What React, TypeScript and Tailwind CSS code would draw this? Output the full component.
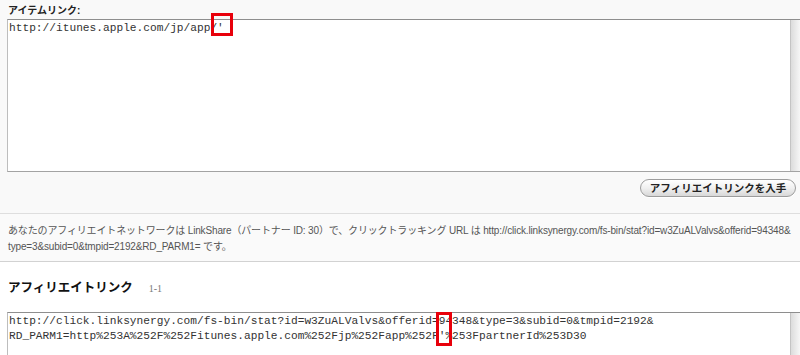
import React from 'react';

const SANS = 'font-["Liberation_Sans","Noto_Sans_CJK_JP",sans-serif]';
const MONO = 'font-["Liberation_Mono","Noto_Sans_CJK_JP",monospace]';

function Marker({ className }: { className: string }) {
  return <span className={`pointer-events-none absolute border-[3px] border-[#e8000b] ${className}`} />;
}

function FakeTextarea({ height, children }: { height: string; children: React.ReactNode }) {
  return (
    <div
      className={`relative flex ${height} w-[793px] border-t border-l border-b border-t-[#8e8e8e] border-l-[#bdbdbd] border-b-[#a3a3a3] bg-white`}
    >
      <div className={`flex-1 pl-[1px] pt-[1px] text-[11.2px] leading-[15px] text-[#333] ${MONO} whitespace-pre`}>
        {children}
      </div>
      <div className="w-[10px] shrink-0 border-l border-[#c4c4c4] bg-gradient-to-r from-[#dcdcdc] to-[#f6f6f6]" />
    </div>
  );
}

export default function App() {
  return (
    <div className={`h-[355px] w-[800px] overflow-hidden bg-white ${SANS}`}>
      <section className="bg-[#f9f9f9] pl-[7px] pt-[3px] pb-[16px]">
        <div className="h-[15px] pl-[1px] text-[10px] font-bold leading-[15px] text-[#222]">アイテムリンク:</div>
        <div className="relative mt-[1px]">
          <FakeTextarea height="h-[153px]">http://itunes.apple.com/jp/app/'</FakeTextarea>
          <Marker className="left-[204px] top-[-6px] h-[23px] w-[22px]" />
        </div>
        <div className="mt-[7px] flex justify-end pr-[4px]">
          <button className="h-[18px] w-[156px] rounded-full border border-[#9c9c9c] bg-gradient-to-b from-[#ffffff] via-[#f0f0f0] to-[#d8d8d8] text-[10.5px] font-bold leading-[16px] text-[#222] shadow-[0_1px_0_#fff]">
            アフィリエイトリンクを入手
          </button>
        </div>
      </section>

      <section className="border-y border-t-[#dedede] border-b-[#d2d2d2] bg-[#fafafa] px-[8px] pt-[9px] pb-[6px] text-[10px] leading-[16px] tracking-[-0.15px] text-[#555] whitespace-nowrap">
        あなたのアフィリエイトネットワークは LinkShare（パートナー ID: 30）で、クリックトラッキング URL は http://click.linksynergy.com/fs-bin/stat?id=w3ZuALValvs&amp;offerid=94348&amp;
        <br />
        type=3&amp;subid=0&amp;tmpid=2192&amp;RD_PARM1= です。
      </section>

      <section className="pl-[7px] pt-[17px]">
        <div className="flex h-[18px] items-end gap-[16px] pl-[1px]">
          <h2 className="text-[12.5px] font-bold leading-[18px] text-[#111]">アフィリエイトリンク</h2>
          <span className='pb-[1px] font-["Liberation_Serif",serif] text-[10px] leading-[14px] text-[#777]'>1-1</span>
        </div>
        <div className="relative mt-[15px]">
          <FakeTextarea height="h-[60px]">
            {'http://click.linksynergy.com/fs-bin/stat?id=w3ZuALValvs&offerid=94348&type=3&subid=0&tmpid=2192&\nRD_PARM1=http%253A%252F%252Fitunes.apple.com%252Fjp%252Fapp%252F\'%253FpartnerId%253D30'}
          </FakeTextarea>
          <Marker className="left-[429px] top-[0px] h-[34px] w-[16px]" />
        </div>
      </section>
    </div>
  );
}
